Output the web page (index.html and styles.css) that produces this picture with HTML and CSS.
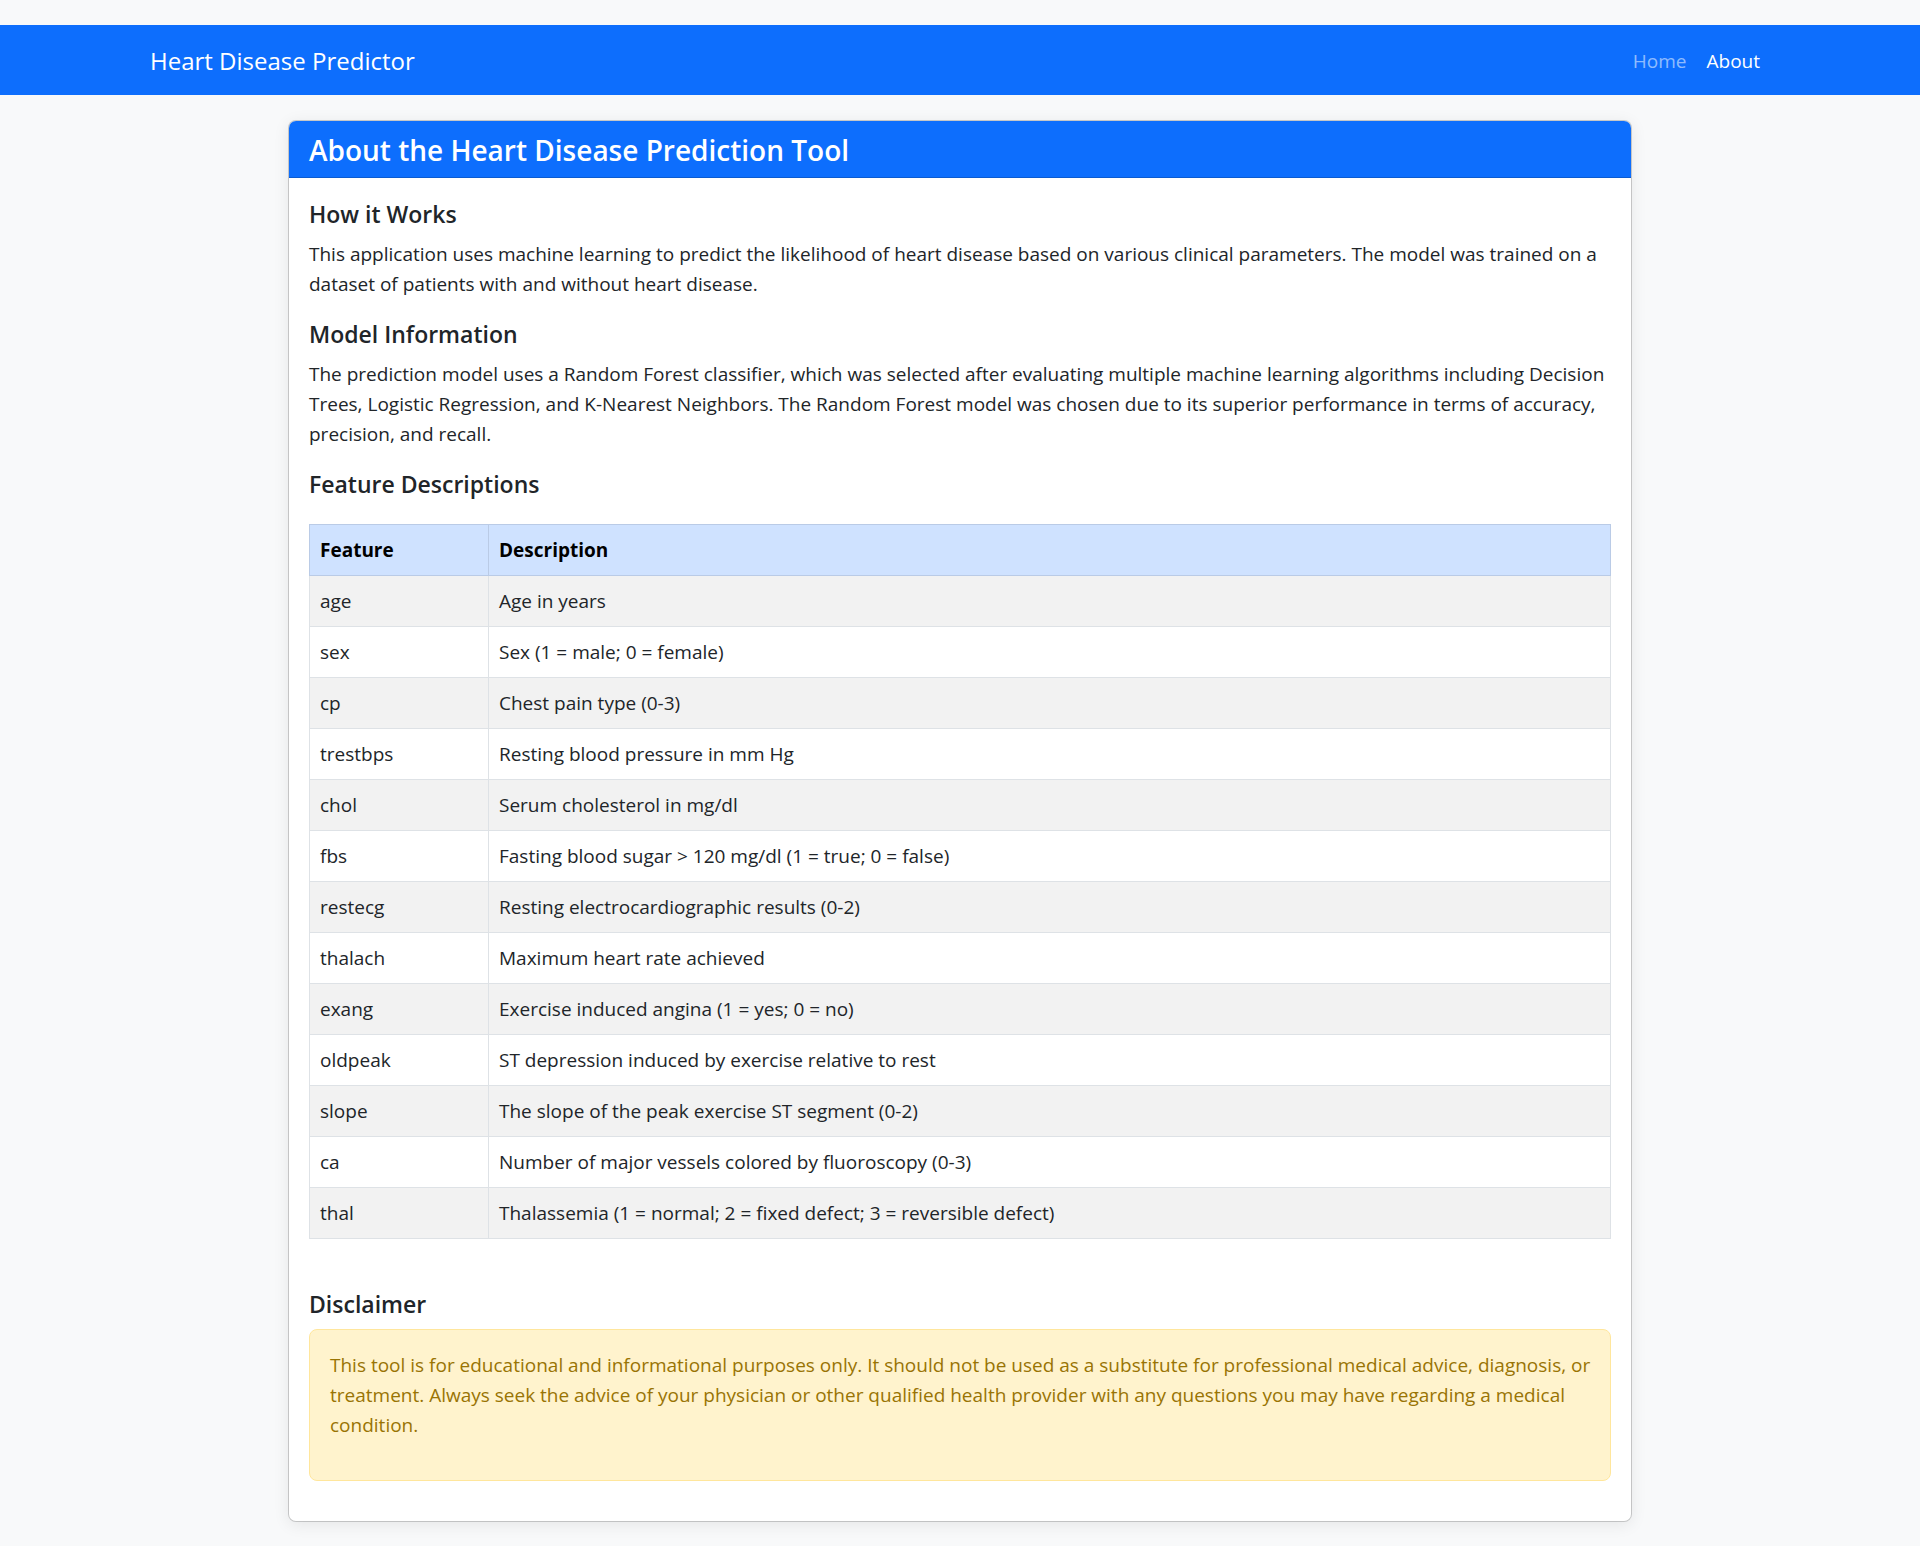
FILE: index.html
```html
<!DOCTYPE html>
<html lang="en">
<head>
  <meta charset="utf-8">
  <meta name="viewport" content="width=device-width, initial-scale=1">
  <title>About - Heart Disease Predictor</title>
  <link rel="stylesheet" href="styles.css">
</head>
<body>
  <nav class="navbar">
    <div class="container navbar-inner">
      <a class="navbar-brand" href="#">Heart Disease Predictor</a>
      <ul class="navbar-nav">
        <li><a class="nav-link" href="#">Home</a></li>
        <li><a class="nav-link active" href="#" aria-current="page">About</a></li>
      </ul>
    </div>
  </nav>

  <main class="container main">
    <article class="card">
      <header class="card-header">
        <h1 class="card-title">About the Heart Disease Prediction Tool</h1>
      </header>
      <div class="card-body">
        <h2 class="heading">How it Works</h2>
        <p class="text">This application uses machine learning to predict the likelihood of heart disease based on various clinical parameters. The model was trained on a dataset of patients with and without heart disease.</p>

        <h2 class="heading">Model Information</h2>
        <p class="text">The prediction model uses a Random Forest classifier, which was selected after evaluating multiple machine learning algorithms including Decision Trees, Logistic Regression, and K-Nearest Neighbors. The Random Forest model was chosen due to its superior performance in terms of accuracy, precision, and recall.</p>

        <h2 class="heading">Feature Descriptions</h2>
        <table class="table">
          <thead>
            <tr><th class="feature" scope="col">Feature</th><th scope="col">Description</th></tr>
          </thead>
          <tbody>
            <tr><td>age</td><td>Age in years</td></tr>
            <tr><td>sex</td><td>Sex (1 = male; 0 = female)</td></tr>
            <tr><td>cp</td><td>Chest pain type (0-3)</td></tr>
            <tr><td>trestbps</td><td>Resting blood pressure in mm Hg</td></tr>
            <tr><td>chol</td><td>Serum cholesterol in mg/dl</td></tr>
            <tr><td>fbs</td><td>Fasting blood sugar &gt; 120 mg/dl (1 = true; 0 = false)</td></tr>
            <tr><td>restecg</td><td>Resting electrocardiographic results (0-2)</td></tr>
            <tr><td>thalach</td><td>Maximum heart rate achieved</td></tr>
            <tr><td>exang</td><td>Exercise induced angina (1 = yes; 0 = no)</td></tr>
            <tr><td>oldpeak</td><td>ST depression induced by exercise relative to rest</td></tr>
            <tr><td>slope</td><td>The slope of the peak exercise ST segment (0-2)</td></tr>
            <tr><td>ca</td><td>Number of major vessels colored by fluoroscopy (0-3)</td></tr>
            <tr><td>thal</td><td>Thalassemia (1 = normal; 2 = fixed defect; 3 = reversible defect)</td></tr>
          </tbody>
        </table>

        <h2 class="heading">Disclaimer</h2>
        <div class="alert" role="note">
          <p class="text">This tool is for educational and informational purposes only. It should not be used as a substitute for professional medical advice, diagnosis, or treatment. Always seek the advice of your physician or other qualified health provider with any questions you may have regarding a medical condition.</p>
        </div>
      </div>
    </article>
  </main>
</body>
</html>
```
FILE: styles.css
```css
*,
*::before,
*::after {
  box-sizing: border-box;
}

body {
  margin: 0;
  padding: 25px 0;
  background: #f8f9fa;
  color: #212529;
  font-family: "Segoe UI", "Open Sans", "Noto Sans", sans-serif;
  font-size: 19px;
  line-height: 30px;
}

.container {
  width: 100%;
  max-width: 1650px;
  margin: 0 auto;
  padding: 0 15px;
}

.navbar {
  margin-bottom: 25px;
  background: #0d6efd;
}

.navbar-inner {
  display: flex;
  align-items: center;
  justify-content: space-between;
  min-height: 70px;
}

.navbar-brand {
  padding: 11px 0 9px;
  color: #fff;
  font-size: 24px;
  text-decoration: none;
}

.navbar-nav {
  display: flex;
  margin: 0;
  padding: 0;
  list-style: none;
}

.nav-link {
  display: block;
  padding: 11px 10px 9px;
  color: rgba(255, 255, 255, 0.55);
  text-decoration: none;
}

.nav-link.active {
  color: #fff;
}

.main {
  display: flex;
  justify-content: center;
}

.card {
  width: 100%;
  max-width: 1344px;
  overflow: hidden;
  background: #fff;
  background-clip: padding-box;
  border: 1px solid rgba(0, 0, 0, 0.176);
  border-radius: 8px;
  box-shadow: 0 3px 16px rgba(0, 0, 0, 0.08);
}

.card-header {
  padding: 11px 20px 9px;
  background: #0d6efd;
  border-bottom: 1px solid #0b5bd0;
  color: #fff;
}

.card-title {
  margin: 0;
  font-size: 28px;
  font-weight: 600;
  line-height: 36px;
}

.card-body {
  padding: 21px 20px 20px;
}

.heading {
  margin: 0 0 10px;
  font-size: 23px;
  font-weight: 600;
  line-height: 30px;
}

.text {
  margin: 0 0 20px;
}

.table {
  width: 100%;
  margin: 25px 0 50px;
  border-collapse: collapse;
}

.table th,
.table td {
  padding: 10px;
  border: 1px solid #dee2e6;
  text-align: left;
}

.table th {
  background: #cfe2ff;
  border-color: #bacbe6;
  color: #000;
  font-weight: 700;
}

.table .feature {
  width: 179px;
}

.table tbody tr:nth-child(odd) {
  background: #f2f2f2;
}

.alert {
  margin-bottom: 20px;
  padding: 20px 10px 20px 20px;
  background: #fff3cd;
  border: 1px solid #ffe69c;
  border-radius: 8px;
  color: #997404;
}
```
